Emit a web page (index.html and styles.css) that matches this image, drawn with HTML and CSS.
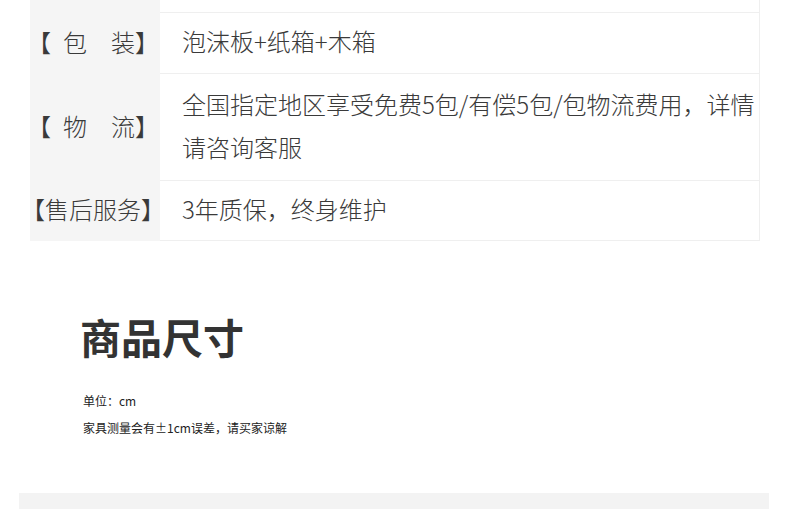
FILE: index.html
```html
<!DOCTYPE html>
<html lang="zh-CN">
<head>
<meta charset="utf-8">
<title>商品参数</title>
<link rel="stylesheet" href="styles.css">
</head>
<body>
<div class="spec">
  <div class="label row-top"></div>
  <div class="value row-top"></div>

  <div class="label row-pack">【&ensp;包&emsp;装】</div>
  <div class="value row-pack">泡沫板+纸箱+木箱</div>

  <div class="label row-ship">【&ensp;物&emsp;流】</div>
  <div class="value row-ship">全国指定地区享受免费5包/有偿5包/包物流费用，详情请咨询客服</div>

  <div class="label row-after">【售后服务】</div>
  <div class="value row-after">3年质保，终身维护</div>
</div>

<section class="size">
  <h2 class="size-title">商品尺寸</h2>
  <p class="note">单位：cm</p>
  <p class="note">家具测量会有±1cm误差，请买家谅解</p>
</section>

<div class="next-block"></div>
</body>
</html>
```

FILE: styles.css
```css
html, body {
  margin: 0;
  padding: 0;
  background: #ffffff;
}

body {
  font-family: "Noto Sans CJK SC", "Noto Sans", sans-serif;
  color: #333333;
  overflow: hidden;
}

.spec {
  display: grid;
  grid-template-columns: 130px 600px;
  margin-left: 30px;
  width: 730px;
}

.label,
.value {
  display: flex;
  align-items: center;
  box-sizing: border-box;
  padding-bottom: 5px;
  font-size: 24px;
  line-height: 43px;
  font-weight: 300;
  color: #3a3a3a;
}

.label {
  background: #f5f5f5;
  justify-content: center;
  white-space: nowrap;
  padding-right: 4px;
}

.value {
  padding-left: 22px;
  border-right: 1px solid #efefef;
  border-bottom: 1px solid #efefef;
}

.row-top { height: 13px; padding-bottom: 0; }
.row-pack { height: 61px; }
.row-ship { height: 107px; }
.row-after { height: 60px; }

.size {
  padding: 70px 0 0 80px;
}

.size-title {
  margin: 0 0 26px;
  font-size: 41px;
  line-height: 50px;
  font-weight: 700;
  color: #333333;
}

.note {
  margin: 0 0 0 3px;
  font-size: 12px;
  line-height: 27px;
  color: #222222;
}

.next-block {
  margin: 52px 0 0 19px;
  width: 750px;
  height: 30px;
  background: #f3f3f3;
}
```
